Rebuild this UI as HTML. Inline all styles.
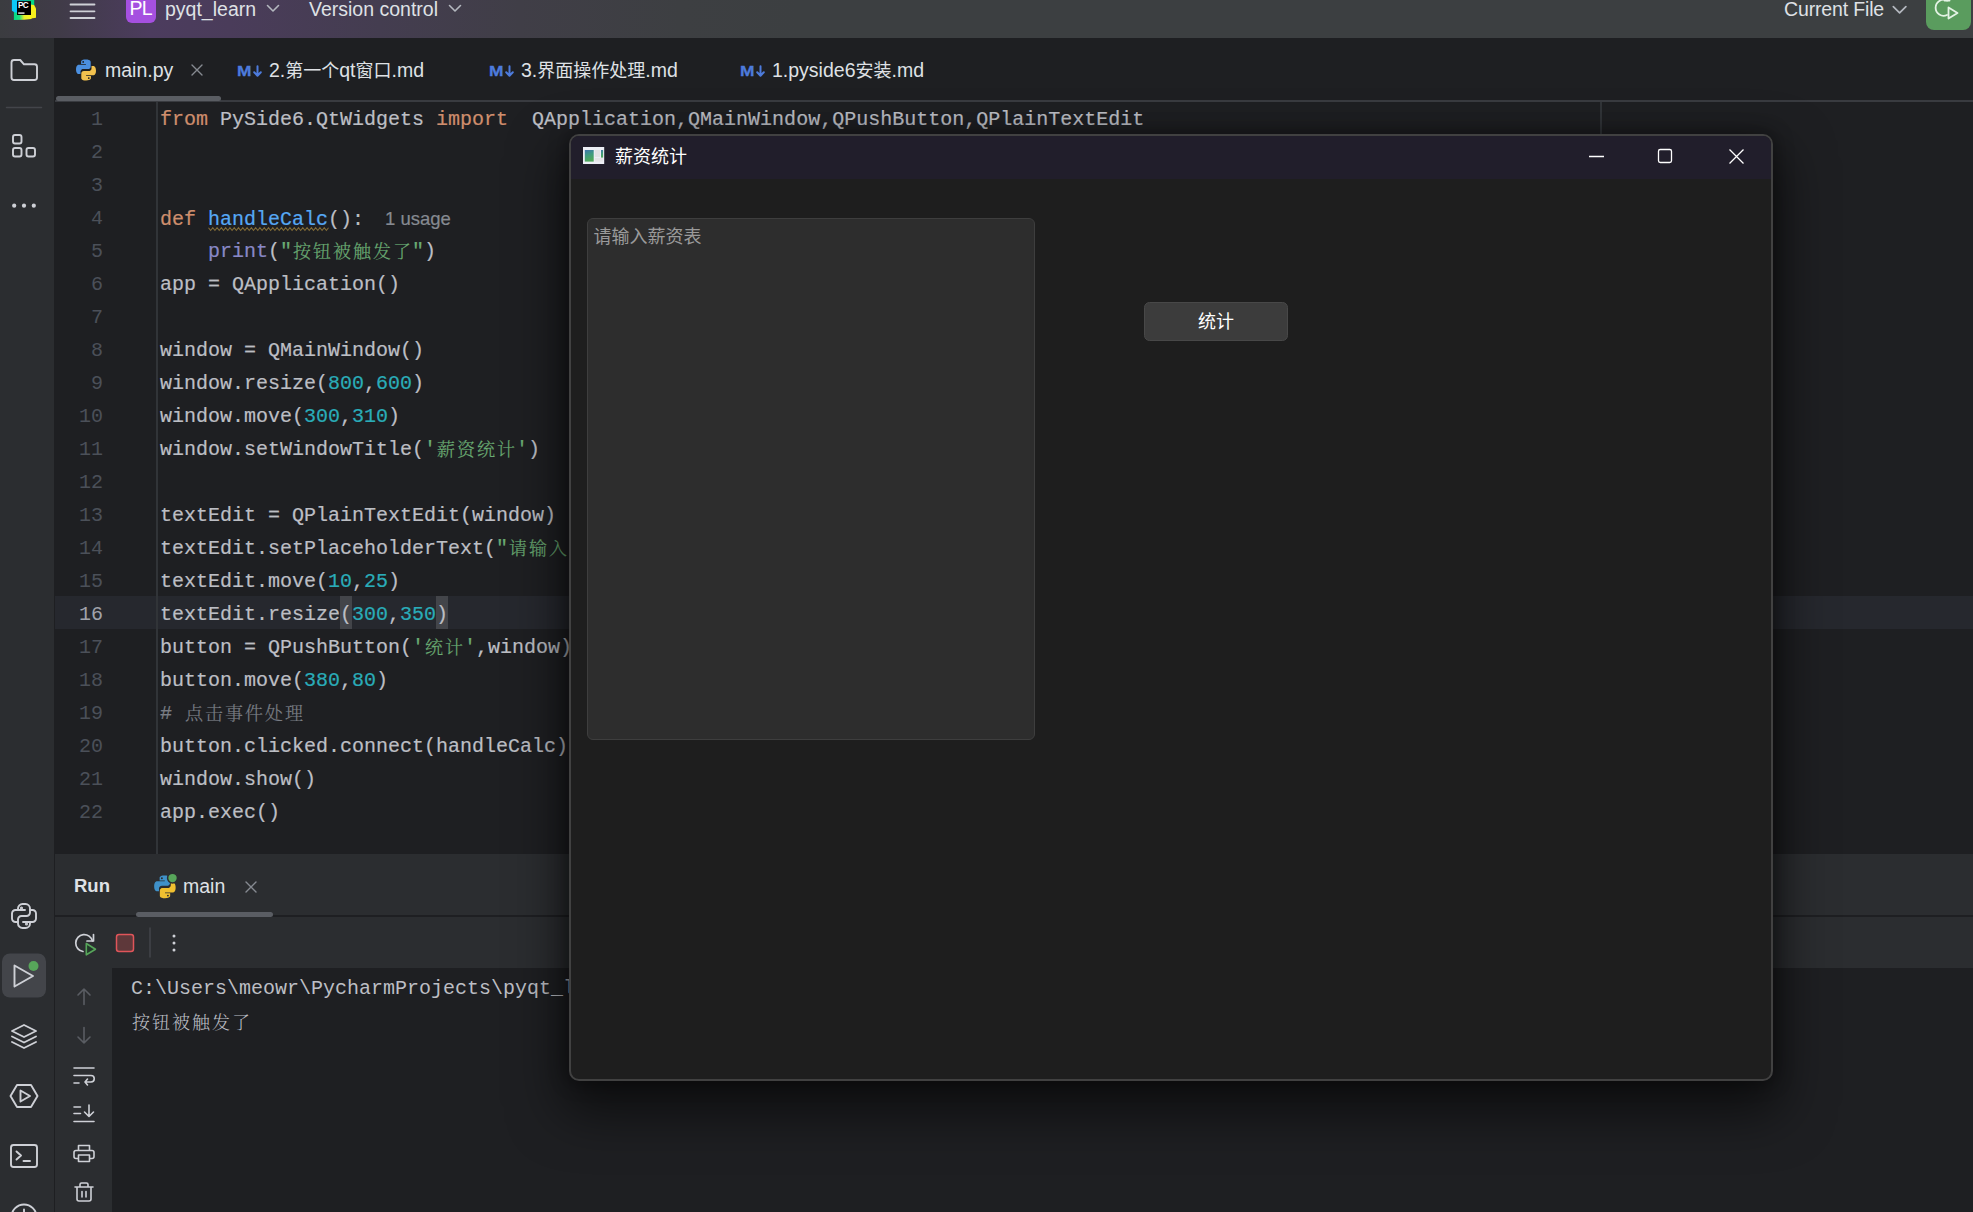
<!DOCTYPE html>
<html lang="zh">
<head>
<meta charset="utf-8">
<title>pyqt_learn – main.py</title>
<style>
*{box-sizing:border-box;margin:0;padding:0}
html,body{width:1973px;height:1212px;overflow:hidden;background:#1e1f22}
body{position:relative;font-family:"Liberation Sans","Noto Sans CJK SC",sans-serif;color:#dfe1e5}
.abs{position:absolute}
svg{position:absolute;overflow:visible}
#topbar{left:0;top:0;width:1973px;height:38px;background:linear-gradient(90deg,#3b3c40 0px,#403b48 60px,#4c3c5e 150px,#4a3c5a 230px,#443d50 380px,#403e47 520px,#3d3f42 680px,#3c3f41 800px,#3c3f41 1973px)}
.ui{position:absolute;font-size:19.5px;line-height:24px;height:24px;white-space:nowrap;color:#dfe1e5}
.cj{font-size:18px}
#sidebar{left:0;top:38px;width:55px;height:1174px;background:#2b2d30;border-right:1px solid #1e1f22}
#tabs{left:55px;top:38px;width:1918px;height:64px;background:#1e1f22}
#tabline{left:0;top:62px;width:1918px;height:2px;background:#393b40}
#tabsel{left:1px;top:58px;width:165px;height:5px;border-radius:3px;background:#5a5d63}
#editor{left:55px;top:102px;width:1918px;height:752px;background:#1e1f22;overflow:hidden}
#curline{left:0;top:494px;width:1918px;height:33px;background:#26282e}
#gutterline{left:101px;top:0;width:2px;height:752px;background:#313438}
#marginline{left:1545px;top:0;width:2px;height:752px;background:#313438}
.ln{position:absolute;left:0;width:48px;text-align:right;font-family:"Liberation Mono",monospace;font-size:20px;line-height:33px;height:33px;color:#4b5059}
.ln.cur{color:#a1a3ab}
.cl{position:absolute;left:105px;font-family:"Liberation Mono","Noto Serif CJK SC",monospace;font-size:20px;line-height:33px;height:33px;white-space:pre;color:#bcbec4;-webkit-text-stroke-width:.2px}
.k{color:#cf8e6d}.f{color:#56a8f5}.n{color:#2aacb8}.s{color:#6aab73}.c{color:#7a7e85}.b{color:#8888c6}
.w{}
.br{background:#43454a;display:inline-block;height:33px;vertical-align:top;margin-top:-2px;padding-top:2px}
.hint{font-family:"Liberation Sans",sans-serif;font-size:18.5px;color:#868a91;margin-left:21px}
#runpanel{left:55px;top:854px;width:1918px;height:358px;background:#2b2d30}
#runline{left:0;top:61px;width:1918px;height:2px;background:#1e1f22}
#runsel{left:81px;top:58px;width:137px;height:5px;border-radius:3px;background:#5a5d63}
#console{left:57px;top:114px;width:1861px;height:244px;background:#1e1f22}
.co{position:absolute;left:19px;font-family:"Liberation Mono","Noto Serif CJK SC",monospace;font-size:20px;line-height:33px;height:33px;white-space:pre;color:#bcbec4}
#win{left:569px;top:134px;width:1204px;height:947px;border:2px solid #414141;border-radius:10px;background:#1e1e1e;overflow:hidden;box-shadow:0 24px 52px 8px rgba(0,0,0,.55),0 0 18px 2px rgba(0,0,0,.35)}
#wtitle{left:0;top:0;width:1200px;height:43px;background:#211e2b}
#wtitle .t{position:absolute;left:44px;top:7px;font-size:18px;line-height:24px;color:#fff;font-family:"Noto Sans CJK SC",sans-serif;white-space:nowrap}
#tedit{left:16px;top:82px;width:448px;height:522px;background:#2d2d2d;border:1.500px solid #3e3e3e;border-radius:6px}
#tedit .p{position:absolute;left:5.5px;top:3.5px;font-size:18px;line-height:24px;color:#9a9a9a;font-family:"Noto Sans CJK SC",sans-serif;white-space:nowrap}
#btn{left:573px;top:166px;width:144px;height:39px;background:#3c3c3c;border:1px solid #484848;border-radius:5.5px;text-align:center;font-size:18px;line-height:34.5px;color:#fff;font-family:"Noto Sans CJK SC",sans-serif}
.md{position:absolute;font-size:15.5px;line-height:18px;font-weight:700;color:#4d7bdc;transform:scale(1.12,1);transform-origin:0 100%;-webkit-text-stroke:.3px #4d7bdc}
.z{font-weight:300;font-size:18px;letter-spacing:2px;margin-left:1px;margin-right:-1px;position:relative;top:1px}

</style>
</head>
<body>
<div id="topbar" class="abs">
<svg style="left:0;top:0" width="48" height="24" viewBox="0 0 48 24">
<defs><linearGradient id="lg1" x1="0" x2="1" y1="0" y2="0"><stop offset="0" stop-color="#00d886"/><stop offset=".32" stop-color="#21e07c"/><stop offset=".58" stop-color="#e8f02a"/><stop offset="1" stop-color="#fcf61e"/></linearGradient>
<linearGradient id="lg2" x1="0" x2="1" y1="0" y2="0"><stop offset="0" stop-color="#0a9fc0"/><stop offset="1" stop-color="#0cc47e"/></linearGradient></defs>
<path d="M13.900 10.500H31.500V19L24 19.800L13.900 19.900Z" fill="url(#lg1)"/>
<path d="M31 4L33.800 4.300L36 8.600V17.800L31 18.600Z" fill="#f7f01c"/>
<path d="M24 15H36V17.900L24 19.700Z" fill="url(#lg1)" opacity="0"/>
<path d="M29 -2H34.200V4.900L31 4.600Z" fill="#00d886"/>
<path d="M11.900 -2H18V13L14.400 12.200L11.900 10.800Z" fill="#0bc8f7"/>
<rect x="17" y="-2" width="14.200" height="3.500" fill="url(#lg2)"/>
<rect x="17" y="1.200" width="14" height="13.800" fill="#000"/>
<text x="18" y="8" font-family="Liberation Sans, sans-serif" font-size="8.200" font-weight="700" fill="#fff" letter-spacing="-0.700">PC</text>
<rect x="18.200" y="12.300" width="6.300" height="1.600" fill="#d0d0d0"/>
</svg>
<svg style="left:70px;top:0" width="26" height="22"><path d="M0.5 4.5H24.5M0.5 11.3H24.5M0.5 18H24.5" stroke="#ced0d6" stroke-width="1.8" stroke-linecap="round" fill="none"/></svg>
<div class="abs" style="left:126px;top:-8px;width:30px;height:30.5px;border-radius:6px;background:#a550e0"></div>
<div class="ui" style="left:129.5px;top:-4px;color:#fff;font-size:19.5px;letter-spacing:-0.8px">PL</div>
<div class="ui" style="left:165px;top:-3px">pyqt_learn</div>
<svg style="left:266px;top:4px" width="14" height="10"><path d="M1.5 1.5L7 7L12.5 1.5" stroke="#b4b8bf" stroke-width="1.6" fill="none" stroke-linecap="round" stroke-linejoin="round"/></svg>
<div class="ui" style="left:309px;top:-3px">Version control</div>
<svg style="left:448px;top:4px" width="14" height="10"><path d="M1.5 1.5L7 7L12.5 1.5" stroke="#b4b8bf" stroke-width="1.6" fill="none" stroke-linecap="round" stroke-linejoin="round"/></svg>
<div class="ui" style="left:1784px;top:-3px;letter-spacing:-0.15px">Current File</div>
<svg style="left:1891.500px;top:5px" width="16" height="10"><path d="M1.300 1.600L7.600 7.900L13.900 1.600" stroke="#b4b8bf" stroke-width="1.700" fill="none" stroke-linecap="round" stroke-linejoin="round"/></svg>
<div class="abs" style="left:1926px;top:-10px;width:45px;height:40px;border-radius:8px;background:#5a9c5e"></div>
<svg style="left:1934px;top:-6px" width="30" height="30" viewBox="0 0 30 30"><path d="M13 6.5 A8 8 0 1 0 13 21" stroke="#e4f3e5" stroke-width="1.8" fill="none" stroke-linecap="round"/><path d="M10.5 6.5H15.5V2" stroke="#e4f3e5" stroke-width="1.8" fill="none" stroke-linecap="round" stroke-linejoin="round"/><path d="M14.5 13.5L23.5 19L14.5 24.5Z" stroke="#e4f3e5" stroke-width="1.8" fill="none" stroke-linejoin="round"/></svg>

</div>
<div id="sidebar" class="abs">
<svg style="left:0;top:0" width="55" height="1174" viewBox="0 38 55 1174" fill="none" stroke="#ced0d6" stroke-width="1.9" stroke-linecap="round" stroke-linejoin="round">
<!-- folder -->
<path d="M11.5 62.5a2.5 2.5 0 0 1 2.500 -2.500h6.200l3.800 4.300h10.500a2.500 2.500 0 0 1 2.500 2.500v10.700a2.500 2.500 0 0 1 -2.500 2.500h-20.500a2.500 2.500 0 0 1 -2.500 -2.500z"/>
<path d="M6.500 107.500H41.500" stroke="#43454a" stroke-width="1.5"/>
<!-- structure -->
<rect x="13" y="135" width="8.500" height="8.500" rx="2"/>
<rect x="13" y="148" width="8.500" height="8.500" rx="2"/>
<rect x="26.500" y="148" width="8.500" height="8.500" rx="2"/>
<!-- dots -->
<g fill="#ced0d6" stroke="none"><circle cx="14.200" cy="205.700" r="2.100"/><circle cx="24" cy="205.700" r="2.100"/><circle cx="33.800" cy="205.700" r="2.100"/></g>
<!-- python console -->
<g transform="translate(24 916)">
<path d="M-1 -12h2.500a4.500 4.500 0 0 1 4.500 4.500v4a3.500 3.500 0 0 1 -3.500 3.500h-5a3.500 3.500 0 0 0 -3.500 3.500v2.500h-2.500a3.500 3.500 0 0 1 -3.500 -3.500v-5a3.500 3.500 0 0 1 3.500 -3.500h9.500"/>
<path d="M1 12h-2.500a4.500 4.500 0 0 1 -4.500 -4.500v-1.500M6 -6h2.500a3.500 3.500 0 0 1 3.500 3.500v5a3.500 3.500 0 0 1 -3.500 3.500h-9.500M6 6v1.500a4.500 4.500 0 0 1 -4.500 4.500"/>
<path d="M-6 -6v-1.500a4.500 4.500 0 0 1 4.500 -4.500"/>
<circle cx="-2.500" cy="-8" r="0.600" fill="#ced0d6"/><circle cx="2.500" cy="8" r="0.600" fill="#ced0d6"/>
</g>
<!-- run active -->
<rect x="2" y="953.500" width="44" height="44" rx="8" fill="#43454a" stroke="none"/>
<path d="M14.500 965.500L33 976L14.500 986.500Z"/>
<circle cx="33.500" cy="966" r="5" fill="#57a55a" stroke="none"/>
<!-- layers -->
<path d="M24 1025L36 1031L24 1037L12 1031Z"/>
<path d="M12 1036.500L24 1042.500L36 1036.500"/>
<path d="M12 1042L24 1048L36 1042"/>
<!-- services -->
<path d="M10.500 1096L17 1085h14L37.500 1096L31 1107H17Z"/>
<path d="M20.500 1090.500L30 1096L20.500 1101.500Z"/>
<!-- terminal -->
<rect x="11" y="1145" width="26" height="22" rx="2.500"/>
<path d="M16.500 1151.500L21 1155.500L16.500 1159.500M23.500 1161H30"/>
<!-- problems -->
<circle cx="24" cy="1217" r="12.500"/>
<path d="M24 1209.500V1218"/>
</svg>

</div>
<div id="tabs" class="abs">
<div class="abs" id="tabline"></div>
<div class="abs" id="tabsel"></div>
<svg style="left:19px;top:20px" width="24" height="24" viewBox="0 0 24 24"><path d="M11.800 1.500c-5 0-4.700 2.200-4.700 2.200v2.300h4.800v.7H5.200S2 6.300 2 11.300s2.800 4.800 2.800 4.800h1.700v-2.300s-.1-2.800 2.800-2.800h4.700s2.700 0 2.700-2.600V4.100s.4-2.600-4.900-2.600zM9.200 3a.9.900 0 1 1 0 1.800.9.900 0 0 1 0-1.800z" fill="#4b8fe0"/><path d="M12.200 22.500c5 0 4.700-2.200 4.700-2.200v-2.300h-4.800v-.7h6.700s3.200.4 3.200-4.600-2.800-4.800-2.800-4.800h-1.700v2.300s.1 2.800-2.800 2.800H10s-2.700 0-2.700 2.600v4.300s-.4 2.600 4.900 2.600zm2.600-1.500a.9.900 0 1 1 0-1.800.9.900 0 0 1 0 1.800z" fill="#f2c14e"/></svg>
<div class="ui" style="left:50px;top:20px">main.py</div>
<svg style="left:135px;top:25px" width="14" height="14"><path d="M2 2L12 12M12 2L2 12" stroke="#868a91" stroke-width="1.400" stroke-linecap="round"/></svg>
<div class="md" style="left:182px;top:24px">M</div><svg style="left:197.5px;top:27.500px" width="9" height="11"><path d="M4.500 0.200V9.500M1.200 6.200L4.500 9.700L7.800 6.200" stroke="#4d7bdc" stroke-width="2" fill="none" stroke-linecap="round" stroke-linejoin="round"/></svg>
<div class="ui" style="left:214px;top:20px">2.<span class="cj">第一个</span>qt<span class="cj">窗口</span>.md</div>
<div class="md" style="left:434px;top:24px">M</div><svg style="left:449.5px;top:27.500px" width="9" height="11"><path d="M4.500 0.200V9.500M1.200 6.200L4.500 9.700L7.800 6.200" stroke="#4d7bdc" stroke-width="2" fill="none" stroke-linecap="round" stroke-linejoin="round"/></svg>
<div class="ui" style="left:466px;top:20px">3.<span class="cj">界面操作处理</span>.md</div>
<div class="md" style="left:685px;top:24px">M</div><svg style="left:700.5px;top:27.500px" width="9" height="11"><path d="M4.500 0.200V9.500M1.200 6.200L4.500 9.700L7.800 6.200" stroke="#4d7bdc" stroke-width="2" fill="none" stroke-linecap="round" stroke-linejoin="round"/></svg>
<div class="ui" style="left:717px;top:20px">1.pyside6<span class="cj">安装</span>.md</div>

</div>
<div id="editor" class="abs">
<div class="abs" id="curline"></div>
<div class="abs" id="gutterline"></div>
<div class="abs" id="marginline"></div>
<svg style="left:152.500px;top:125px" width="122" height="5"><path d="M0.500 0.700l2.143 2.8l2.143 -2.8l2.143 2.8l2.143 -2.8l2.143 2.8l2.143 -2.8l2.143 2.8l2.143 -2.8l2.143 2.8l2.143 -2.8l2.143 2.8l2.143 -2.8l2.143 2.8l2.143 -2.8l2.143 2.8l2.143 -2.8l2.143 2.8l2.143 -2.8l2.143 2.8l2.143 -2.8l2.143 2.8l2.143 -2.8l2.143 2.8l2.143 -2.8l2.143 2.8l2.143 -2.8l2.143 2.8l2.143 -2.8l2.143 2.8l2.143 -2.8l2.143 2.8l2.143 -2.8l2.143 2.8l2.143 -2.8l2.143 2.8l2.143 -2.8l2.143 2.8l2.143 -2.8l2.143 2.8l2.143 -2.8l2.143 2.8l2.143 -2.8l2.143 2.8l2.143 -2.8l2.143 2.8l2.143 -2.8l2.143 2.8l2.143 -2.8l2.143 2.8l2.143 -2.8l2.143 2.8l2.143 -2.8l2.143 2.8l2.143 -2.8l2.143 2.8l2.143 -2.8" stroke="#826c38" stroke-width="1.050" fill="none" stroke-linejoin="miter"/></svg>
<div class="ln" style="top:1px">1</div>
<div class="cl" style="top:1px"><span class="k">from</span> PySide6.QtWidgets <span class="k">import</span>  QApplication,QMainWindow,QPushButton,QPlainTextEdit</div>
<div class="ln" style="top:34px">2</div>
<div class="ln" style="top:67px">3</div>
<div class="ln" style="top:100px">4</div>
<div class="cl" style="top:100px"><span class="k">def</span> <span class="f w">handleCalc</span>():<span class="hint">1 usage</span></div>
<div class="ln" style="top:133px">5</div>
<div class="cl" style="top:133px">    <span class="b">print</span>(<span class="s">"<span class="z">按钮被触发了</span>"</span>)</div>
<div class="ln" style="top:166px">6</div>
<div class="cl" style="top:166px">app = QApplication()</div>
<div class="ln" style="top:199px">7</div>
<div class="ln" style="top:232px">8</div>
<div class="cl" style="top:232px">window = QMainWindow()</div>
<div class="ln" style="top:265px">9</div>
<div class="cl" style="top:265px">window.resize(<span class="n">800</span>,<span class="n">600</span>)</div>
<div class="ln" style="top:298px">10</div>
<div class="cl" style="top:298px">window.move(<span class="n">300</span>,<span class="n">310</span>)</div>
<div class="ln" style="top:331px">11</div>
<div class="cl" style="top:331px">window.setWindowTitle(<span class="s">'<span class="z">薪资统计</span>'</span>)</div>
<div class="ln" style="top:364px">12</div>
<div class="ln" style="top:397px">13</div>
<div class="cl" style="top:397px">textEdit = QPlainTextEdit(window)</div>
<div class="ln" style="top:430px">14</div>
<div class="cl" style="top:430px">textEdit.setPlaceholderText(<span class="s">"<span class="z">请输入薪资表</span>"</span>)</div>
<div class="ln" style="top:463px">15</div>
<div class="cl" style="top:463px">textEdit.move(<span class="n">10</span>,<span class="n">25</span>)</div>
<div class="ln cur" style="top:496px">16</div>
<div class="cl" style="top:496px">textEdit.resize<span class="br">(</span><span class="n">300</span>,<span class="n">350</span><span class="br">)</span></div>
<div class="ln" style="top:529px">17</div>
<div class="cl" style="top:529px">button = QPushButton(<span class="s">'<span class="z">统计</span>'</span>,window)</div>
<div class="ln" style="top:562px">18</div>
<div class="cl" style="top:562px">button.move(<span class="n">380</span>,<span class="n">80</span>)</div>
<div class="ln" style="top:595px">19</div>
<div class="cl" style="top:595px"><span class="c"># <span class="z">点击事件处理</span></span></div>
<div class="ln" style="top:628px">20</div>
<div class="cl" style="top:628px">button.clicked.connect(handleCalc)</div>
<div class="ln" style="top:661px">21</div>
<div class="cl" style="top:661px">window.show()</div>
<div class="ln" style="top:694px">22</div>
<div class="cl" style="top:694px">app.exec()</div>

</div>
<div id="runpanel" class="abs">
<div class="abs" id="runline"></div>
<div class="abs" id="runsel"></div>
<div class="ui" style="left:19px;top:20px;font-weight:700;font-size:18.500px">Run</div>
<svg style="left:97.300px;top:19.700px" width="25.800" height="25.800" viewBox="0 0 24 24"><path d="M11.800 1.500c-5 0-4.700 2.200-4.700 2.200v2.300h4.800v.7H5.200S2 6.300 2 11.300s2.800 4.800 2.800 4.800h1.700v-2.300s-.1-2.800 2.800-2.800h4.700s2.700 0 2.700-2.600V4.100s.4-2.600-4.900-2.600zM9.200 3a.9.900 0 1 1 0 1.800.9.900 0 0 1 0-1.800z" fill="#3f91c9"/><path d="M12.200 22.500c5 0 4.700-2.200 4.700-2.200v-2.300h-4.800v-.7h6.700s3.200.4 3.200-4.600-2.800-4.800-2.800-4.800h-1.700v2.300s.1 2.800-2.800 2.800H10s-2.700 0-2.700 2.600v4.300s-.4 2.600 4.900 2.600zm2.600-1.500a.9.900 0 1 1 0-1.800.9.900 0 0 1 0 1.800z" fill="#f0c030"/><circle cx="19.100" cy="3.800" r="4.600" fill="#57a55a" stroke="#2b2d30" stroke-width="1.400"/></svg>
<div class="ui" style="left:128px;top:20px">main</div>
<svg style="left:189px;top:26px" width="14" height="14"><path d="M2 2L12 12M12 2L2 12" stroke="#868a91" stroke-width="1.400" stroke-linecap="round"/></svg>
<!-- toolbar -->
<svg style="left:0;top:63px" width="200" height="51" viewBox="55 917 200 51" fill="none" stroke-linecap="round" stroke-linejoin="round">
<path d="M83 951.500A8.500 8.500 0 1 1 92.500 941" stroke="#ced0d6" stroke-width="1.700"/>
<path d="M93.500 934.500V941H87" stroke="#ced0d6" stroke-width="1.700"/>
<path d="M86.300 943.500L95.500 949.200L86.300 954.800Z" stroke="#57a55a" stroke-width="1.600" fill="#23382a"/>
<rect x="116.500" y="934.500" width="17" height="17" rx="2.500" fill="#5e383a" stroke="#e0555a" stroke-width="1.500"/>
<path d="M150 928V957" stroke="#43454a" stroke-width="1.500"/>
<g fill="#ced0d6"><circle cx="174" cy="936" r="1.500"/><circle cx="174" cy="943" r="1.500"/><circle cx="174" cy="950" r="1.500"/></g>
</svg>
<!-- console gutter icons -->
<svg style="left:0;top:114px" width="57" height="244" viewBox="55 968 57 244" fill="none" stroke="#ced0d6" stroke-width="1.600" stroke-linecap="round" stroke-linejoin="round">
<path d="M84 1004.500V989M78 995L84 989L90 995" stroke="#5a5d63"/>
<path d="M84 1027.500V1043M78 1037L84 1043L90 1037" stroke="#5a5d63"/>
<path d="M74 1068H94M74 1075.500H91a3.200 3.200 0 0 1 0 6.500H85M87.500 1079L85 1082L87.500 1085M74 1083H79"/>
<path d="M74 1107H80.500M74 1113.500H80.500M74 1121.500H94M89 1105V1116M84.500 1112L89 1116.500L93.500 1112"/>
<path d="M78.500 1150.500V1145.500H89.500V1150.500M78 1158.500H76a2 2 0 0 1 -2 -2V1152.500a2 2 0 0 1 2 -2H92a2 2 0 0 1 2 2V1156.500a2 2 0 0 1 -2 2H90M78.500 1155H89.500V1161.500H78.500Z"/>
<path d="M75 1187H93M80 1187V1184.500a1.500 1.500 0 0 1 1.500 -1.500h5a1.500 1.500 0 0 1 1.500 1.500V1187M77 1187.500V1199a2 2 0 0 0 2 2h10a2 2 0 0 0 2 -2V1187.500M82 1191.500V1197M86 1191.500V1197"/>
</svg>
<div class="abs" id="console">
<div class="co" style="top:4px">C:\Users\meowr\PycharmProjects\pyqt_learn\.venv\Scripts\python.exe C:\Users\meowr\PycharmProjects\pyqt_learn\main.py</div>
<div class="co" style="top:38px"><span class="z">按钮被触发了</span></div>
</div>

</div>
<div id="win" class="abs">
<div class="abs" id="wtitle">
<svg style="left:12px;top:11px" width="22" height="18" viewBox="0 0 22 18"><defs><linearGradient id="wg" x1="0" y1="0" x2="0.300" y2="1"><stop offset="0" stop-color="#3f74ad"/><stop offset=".5" stop-color="#3f9a80"/><stop offset="1" stop-color="#4fa85a"/></linearGradient></defs><rect x="0" y="0" width="21.200" height="17" fill="#eceef5"/><rect x="1.800" y="3" width="8.900" height="11.600" fill="url(#wg)"/><rect x="11.800" y="3" width="5.200" height="7" fill="#e2e2e4"/><rect x="11.800" y="11" width="8" height="3.600" fill="#e4e4e6"/><rect x="18" y="3" width="2.100" height="7.600" fill="url(#wg)"/></svg>
<div class="t">薪资统计</div>
<svg style="left:1007.700px;top:-2px" width="192" height="44" fill="none" stroke="#fff" stroke-width="1.300"><path d="M10 22.500H25"/><rect x="79.500" y="15.500" width="13" height="13" rx="1.800"/><path d="M150.500 15.500L164.500 29.500M164.500 15.500L150.500 29.500"/></svg>
</div>
<div class="abs" id="tedit"><div class="p">请输入薪资表</div></div>
<div class="abs" id="btn">统计</div>

</div>
</body>
</html>
